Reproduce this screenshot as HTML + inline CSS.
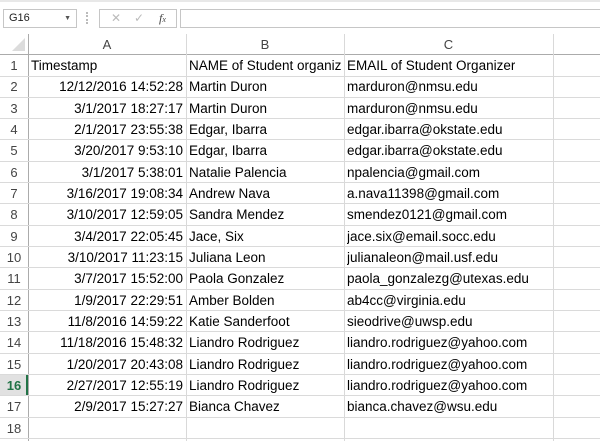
<!DOCTYPE html><html><head><style>
body{margin:0;width:600px;height:441px;overflow:hidden;background:#fff;font-family:"Liberation Sans",Arial,sans-serif;position:relative}
.a{position:absolute;box-sizing:border-box}
.c{position:absolute;font-size:13.5px;color:#000;white-space:nowrap;line-height:21px;overflow:hidden}
.h{position:absolute;font-size:13px;color:#444;text-align:center;line-height:21px}
</style></head><body>
<div class="a" style="left:0;top:0;width:600px;height:34px;background:#fff;border-top:2px solid #e8e8e8"></div>
<div class="a" style="left:3px;top:9px;width:74px;height:19px;border:1px solid #c6c6c6;font-size:11px;line-height:17px;padding-left:5px;color:#222">G16<span style="position:absolute;right:5px;top:0;font-size:7px;color:#555">▼</span></div>
<div class="a" style="left:86px;top:12px;width:2px;height:12px;border-left:2px dotted #bbb"></div>
<div class="a" style="left:99px;top:9px;width:78px;height:19px;border:1px solid #c6c6c6;font-size:12px;line-height:17px;color:#bbb"><span style="position:absolute;left:11px">✕</span><span style="position:absolute;left:34px">✓</span><span style="position:absolute;left:59px;color:#444;font-style:italic;font-family:'Liberation Serif',serif">f<small style="font-size:8px">x</small></span></div>
<div class="a" style="left:180px;top:9px;width:425px;height:19px;border:1px solid #c6c6c6"></div>
<div class="a" style="left:0;top:34px;width:600px;height:21px;background:#fff;border-bottom:1px solid #ababab"></div>
<svg class="a" style="left:12px;top:38px" width="14" height="14"><polygon points="13,0 13,13 0,13" fill="#dcdcdc"/></svg>
<div class="a" style="left:28px;top:34px;width:1px;height:407px;background:#ababab"></div>
<div class="h" style="left:28px;top:34px;width:158px">A</div>
<div class="h" style="left:186px;top:34px;width:158px">B</div>
<div class="h" style="left:344px;top:34px;width:209px">C</div>
<div class="a" style="left:186px;top:34px;width:1px;height:407px;background:#d9d9d9"></div>
<div class="a" style="left:344px;top:34px;width:1px;height:407px;background:#d9d9d9"></div>
<div class="a" style="left:553px;top:34px;width:1px;height:407px;background:#d9d9d9"></div>
<div id="rows"></div>
<script>
var d=[["Timestamp","NAME of Student organiz","EMAIL of Student Organizer"],
["12/12/2016 14:52:28","Martin Duron","marduron@nmsu.edu"],
["3/1/2017 18:27:17","Martin Duron","marduron@nmsu.edu"],
["2/1/2017 23:55:38","Edgar, Ibarra","edgar.ibarra@okstate.edu"],
["3/20/2017 9:53:10","Edgar, Ibarra","edgar.ibarra@okstate.edu"],
["3/1/2017 5:38:01","Natalie Palencia","npalencia@gmail.com"],
["3/16/2017 19:08:34","Andrew Nava","a.nava11398@gmail.com"],
["3/10/2017 12:59:05","Sandra Mendez","smendez0121@gmail.com"],
["3/4/2017 22:05:45","Jace, Six","jace.six@email.socc.edu"],
["3/10/2017 11:23:15","Juliana Leon","julianaleon@mail.usf.edu"],
["3/7/2017 15:52:00","Paola Gonzalez","paola_gonzalezg@utexas.edu"],
["1/9/2017 22:29:51","Amber Bolden","ab4cc@virginia.edu"],
["11/8/2016 14:59:22","Katie Sanderfoot","sieodrive@uwsp.edu"],
["11/18/2016 15:48:32","Liandro Rodriguez","liandro.rodriguez@yahoo.com"],
["1/20/2017 20:43:08","Liandro Rodriguez","liandro.rodriguez@yahoo.com"],
["2/27/2017 12:55:19","Liandro Rodriguez","liandro.rodriguez@yahoo.com"],
["2/9/2017 15:27:27","Bianca Chavez","bianca.chavez@wsu.edu"],["","",""]];
var h="";
for(var i=0;i<18;i++){var t=55+i*21.33;var sel=i==15;
h+='<div class="a" style="left:0;top:'+t+'px;width:28px;height:21px;'+(sel?'background:#e1e1e1;border-right:2px solid #217346;':'')+'"></div>';
h+='<div class="h" style="left:0;top:'+t+'px;width:28px;'+(sel?'color:#217346;font-weight:bold;':'')+'">'+(i+1)+'</div>';
h+='<div class="a" style="left:0;top:'+(t+20.5)+'px;width:600px;height:1px;background:#dadada"></div>';
var r=d[i];
if(i==0)h+='<div class="c" style="left:31px;top:'+t+'px">'+r[0]+'</div>';
else h+='<div class="c" style="left:30px;width:153px;text-align:right;top:'+t+'px">'+r[0]+'</div>';
h+='<div class="c" style="left:189px;width:155px;top:'+t+'px">'+r[1]+'</div>';
h+='<div class="c" style="left:347px;top:'+t+'px">'+r[2]+'</div>';}
document.getElementById("rows").innerHTML=h;
</script>
</body></html>
